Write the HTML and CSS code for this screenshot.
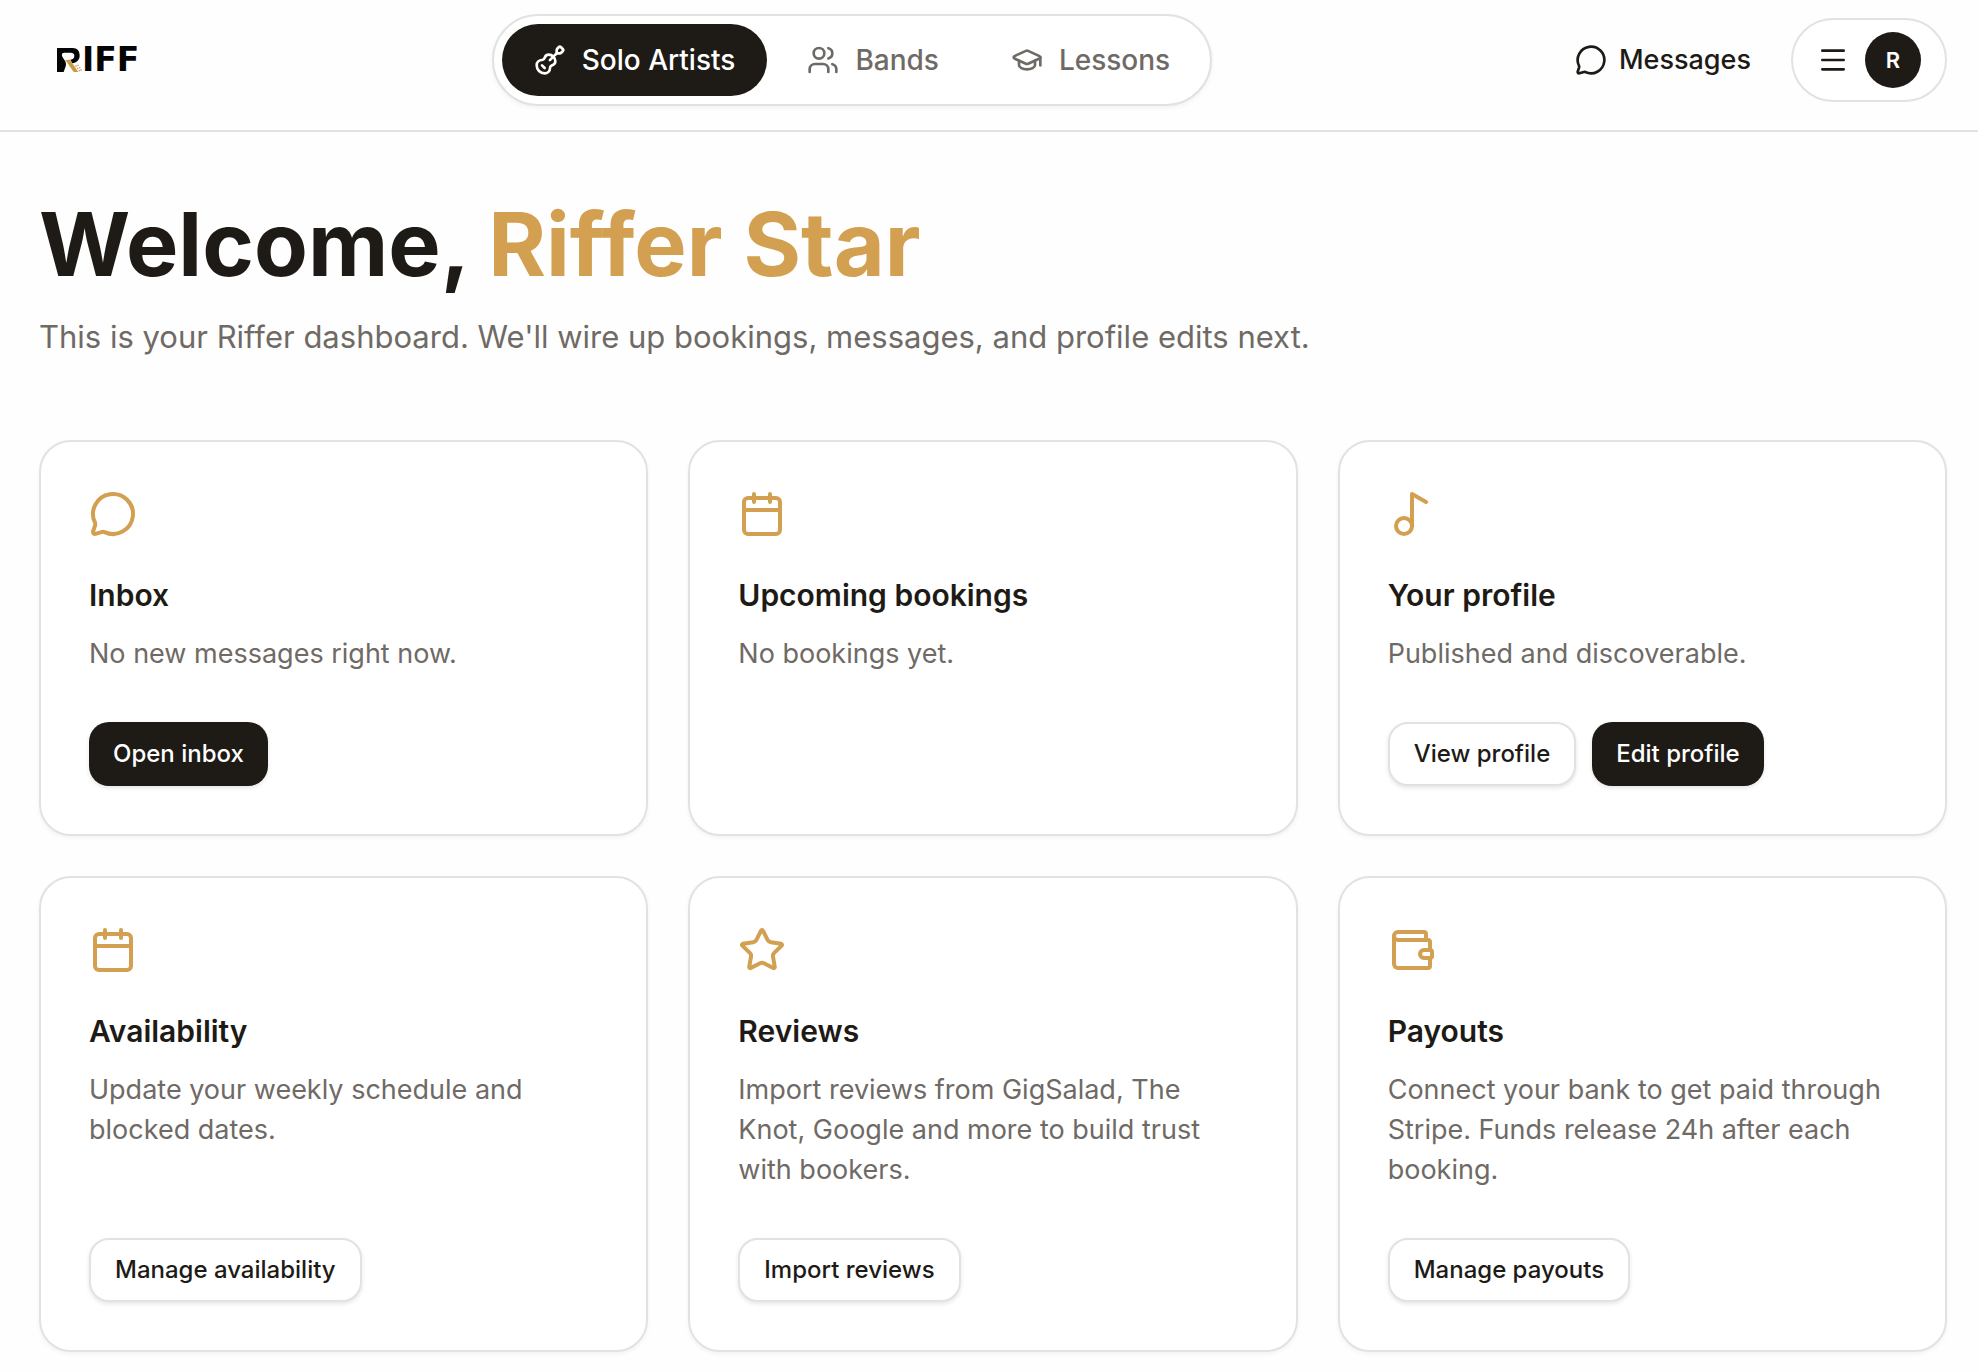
FILE: index.html
```html
<!DOCTYPE html>
<html lang="en">
<head>
<meta charset="utf-8">
<meta name="viewport" content="width=device-width, initial-scale=1">
<title>Riff – Dashboard</title>
<link rel="stylesheet" href="styles.css">
</head>
<body>
<svg class="sprite" aria-hidden="true">
  <symbol id="i-message" viewBox="0 0 24 24"><path d="M2.992 16.342a2 2 0 0 1 .094 1.167l-1.065 3.29a1 1 0 0 0 1.236 1.168l3.413-.998a2 2 0 0 1 1.099.092 10 10 0 1 0-4.777-4.719"/></symbol>
  <symbol id="i-calendar" viewBox="0 0 24 24"><path d="M8 2v4M16 2v4M3 10h18"/><rect width="18" height="18" x="3" y="4" rx="2"/></symbol>
  <symbol id="i-users" viewBox="0 0 24 24"><path d="M16 21v-2a4 4 0 0 0-4-4H6a4 4 0 0 0-4 4v2"/><circle cx="9" cy="7" r="4"/><path d="M22 21v-2a4 4 0 0 0-3-3.87M16 3.128a4 4 0 0 1 0 7.744"/></symbol>
</svg>
<header class="header">
  <a class="logo" href="#" aria-label="Riff home">
    <svg class="logo-mark" viewBox="0 0 78 78" aria-hidden="true">
      <path fill="#050505" d="M3 3H50C64 3 71 12 71 26C71 38 62 47 49 49L43 38C52 37 55 32 55 26C55 19 50 17 44 17H26C18 17 16 21 19 29C23 37 30 42 30 51C30 59 26 66 23 75H3Z"/>
      <path fill="#c99a4a" d="M28 39L42 38L67 75H53Z"/>
      <path fill="#c99a4a" d="M58 55h4v4h-4zM64 53h4v4h-4zM63 62h4v4h-4zM69 60h4v4h-4zM68 69h4v4h-4zM73 67h4v4h-4z"/>
    </svg>
    <span class="logo-text">IFF</span>
  </a>
  <nav class="tabs" aria-label="Categories">
    <a class="tab tab-active" href="#">
      <svg class="icon" viewBox="0 0 24 24"><path d="m11.9 12.1 4.514-4.514"/><path d="M20.1 2.3a1 1 0 0 0-1.4 0l-1.114 1.114A2 2 0 0 0 17 4.828v1.344a2 2 0 0 1-.586 1.414A2 2 0 0 1 17.828 7h1.344a2 2 0 0 0 1.414-.586L21.7 5.3a1 1 0 0 0 0-1.4z"/><path d="m6 16 2 2"/><path d="M8.23 9.85A3 3 0 0 1 11 8a5 5 0 0 1 5 5 3 3 0 0 1-1.85 2.77l-.92.38A2 2 0 0 0 12 18a4 4 0 0 1-4 4 6 6 0 0 1-6-6 4 4 0 0 1 4-4 2 2 0 0 0 1.85-1.23z"/></svg>
      Solo Artists</a>
    <a class="tab" href="#"><svg class="icon"><use href="#i-users"/></svg>Bands</a>
    <a class="tab" href="#">
      <svg class="icon" viewBox="0 0 24 24"><path d="M21.42 10.922a1 1 0 0 0-.019-1.838L12.83 5.18a2 2 0 0 0-1.66 0L2.6 9.08a1 1 0 0 0 0 1.832l8.57 3.908a2 2 0 0 0 1.66 0z"/><path d="M22 10v6"/><path d="M6 12.5V16a6 3 0 0 0 12 0v-3.5"/></svg>
      Lessons</a>
  </nav>
  <div class="account">
    <a class="messages" href="#"><svg class="icon"><use href="#i-message"/></svg>Messages</a>
    <button class="menu" type="button" aria-label="Account menu">
      <svg class="icon" viewBox="0 0 24 24"><path d="M4 5h16M4 12h16M4 19h16"/></svg>
      <span class="avatar">R</span>
    </button>
  </div>
</header>
<main class="main">
  <h1 class="title">Welcome, <span class="accent">Riffer Star</span></h1>
  <p class="lead">This is your Riffer dashboard. We'll wire up bookings, messages, and profile edits next.</p>
  <div class="cards">
    <section class="card">
      <svg class="card-icon"><use href="#i-message"/></svg>
      <h2 class="card-title">Inbox</h2>
      <p class="card-text">No new messages right now.</p>
      <div class="actions"><button class="btn btn-dark" type="button">Open inbox</button></div>
    </section>
    <section class="card">
      <svg class="card-icon"><use href="#i-calendar"/></svg>
      <h2 class="card-title">Upcoming bookings</h2>
      <p class="card-text">No bookings yet.</p>
    </section>
    <section class="card">
      <svg class="card-icon" viewBox="0 0 24 24"><circle cx="8" cy="18" r="4"/><path d="M12 18V2l7 4"/></svg>
      <h2 class="card-title">Your profile</h2>
      <p class="card-text">Published and discoverable.</p>
      <div class="actions"><button class="btn" type="button">View profile</button><button class="btn btn-dark" type="button">Edit profile</button></div>
    </section>
    <section class="card">
      <svg class="card-icon"><use href="#i-calendar"/></svg>
      <h2 class="card-title">Availability</h2>
      <p class="card-text">Update your weekly schedule and blocked dates.</p>
      <div class="actions"><button class="btn" type="button">Manage availability</button></div>
    </section>
    <section class="card">
      <svg class="card-icon" viewBox="0 0 24 24"><path d="M11.525 2.295a.53.53 0 0 1 .95 0l2.31 4.679a2.123 2.123 0 0 0 1.595 1.16l5.166.756a.53.53 0 0 1 .294.904l-3.736 3.638a2.123 2.123 0 0 0-.611 1.878l.882 5.14a.53.53 0 0 1-.771.56l-4.618-2.428a2.122 2.122 0 0 0-1.973 0L6.396 21.01a.53.53 0 0 1-.77-.56l.881-5.139a2.122 2.122 0 0 0-.611-1.879L2.16 9.795a.53.53 0 0 1 .294-.906l5.165-.755a2.122 2.122 0 0 0 1.597-1.16z"/></svg>
      <h2 class="card-title">Reviews</h2>
      <p class="card-text">Import reviews from GigSalad, The Knot, Google and more to build trust with bookers.</p>
      <div class="actions"><button class="btn" type="button">Import reviews</button></div>
    </section>
    <section class="card">
      <svg class="card-icon" viewBox="0 0 24 24"><path d="M19 7V4a1 1 0 0 0-1-1H5a2 2 0 0 0 0 4h15a1 1 0 0 1 1 1v4h-3a2 2 0 0 0 0 4h3a1 1 0 0 0 1-1v-2a1 1 0 0 0-1-1"/><path d="M3 5v14a2 2 0 0 0 2 2h15a1 1 0 0 0 1-1v-4"/></svg>
      <h2 class="card-title">Payouts</h2>
      <p class="card-text">Connect your bank to get paid through Stripe. Funds release 24h after each booking.</p>
      <div class="actions"><button class="btn" type="button">Manage payouts</button></div>
    </section>
  </div>
</main>
</body>
</html>
```
FILE: styles.css
```css
:root {
  --ink: #1e1b16;
  --muted: #6f6a65;
  --line: #e2e2e1;
  --gold: #d2a050;
}
* { box-sizing: border-box; }
body {
  margin: 0;
  background: #fefefe;
  color: var(--ink);
  font-family: Inter, "Liberation Sans", sans-serif;
  font-size: 27px;
  line-height: 40px;
}
a { color: inherit; text-decoration: none; }
button { font: inherit; color: inherit; cursor: pointer; }
h1, h2, p { margin: 0; }
svg { display: block; flex: none; }
.sprite { position: absolute; width: 0; height: 0; }
.icon, .card-icon {
  fill: none;
  stroke: currentColor;
  stroke-width: 2;
  stroke-linecap: round;
  stroke-linejoin: round;
}
.icon { width: 32px; height: 32px; }
.header {
  display: flex;
  align-items: center;
  justify-content: space-between;
  padding: 14px 31px 24px 39px;
  border-bottom: 2px solid var(--line);
}
.logo {
  display: flex;
  align-items: center;
  width: 114px;
  padding-left: 17px;
  color: #050505;
}
.logo-mark { width: 26px; height: 26px; }
.logo-text {
  font: bold 33px/40px "DejaVu Sans", sans-serif;
}
.tabs {
  display: flex;
  gap: 8px;
  padding: 8px;
  border: 2px solid var(--line);
  border-radius: 46px;
  background: #fff;
  box-shadow: 0 2px 4px rgba(0, 0, 0, 0.05);
}
.tab {
  display: flex;
  align-items: center;
  gap: 16px;
  padding: 16px 32px;
  border-radius: 36px;
  color: var(--muted);
  font-size: 28px;
  font-weight: 500;
}
.tab-active { background: var(--ink); color: #fff; }
.account { display: flex; align-items: center; gap: 16px; }
.messages {
  display: flex;
  align-items: center;
  gap: 12px;
  padding: 0 24px;
  font-weight: 500;
}
.menu {
  display: flex;
  align-items: center;
  gap: 16px;
  padding: 12px 24px;
  border: 2px solid var(--line);
  border-radius: 42px;
  background: #fff;
}
.avatar {
  display: grid;
  place-items: center;
  width: 56px;
  height: 56px;
  border-radius: 50%;
  background: var(--ink);
  color: #fff;
  font-size: 22px;
  font-weight: 600;
}
.main { padding: 64px 31px 20px 39px; }
.title { font-size: 88px; line-height: 96px; font-weight: 700; }
.accent { color: var(--gold); }
.lead {
  margin: 20px 0 78px;
  color: var(--muted);
  font-size: 31px;
  line-height: 50px;
}
.cards {
  display: grid;
  grid-template-columns: repeat(3, minmax(0, 1fr));
  gap: 40px;
}
.card {
  display: flex;
  flex-direction: column;
  padding: 48px;
  border: 2px solid var(--line);
  border-radius: 32px;
  background: #fff;
  box-shadow: 0 2px 4px rgba(0, 0, 0, 0.05);
}
.card-icon { width: 48px; height: 48px; color: var(--gold); }
.card-title {
  margin: 32px 0 14px;
  font-size: 30px;
  line-height: 50px;
  font-weight: 600;
}
.card-text { color: var(--muted); }
.actions {
  display: flex;
  flex-wrap: wrap;
  gap: 16px;
  margin-top: auto;
  padding-top: 48px;
}
.btn {
  height: 64px;
  padding: 0 24px;
  border: 2px solid var(--line);
  border-radius: 20px;
  background: #fff;
  font-size: 24px;
  font-weight: 500;
  box-shadow: 0 2px 4px rgba(0, 0, 0, 0.1);
}
.btn-dark { border: 0; background: var(--ink); color: #fff; }
```
